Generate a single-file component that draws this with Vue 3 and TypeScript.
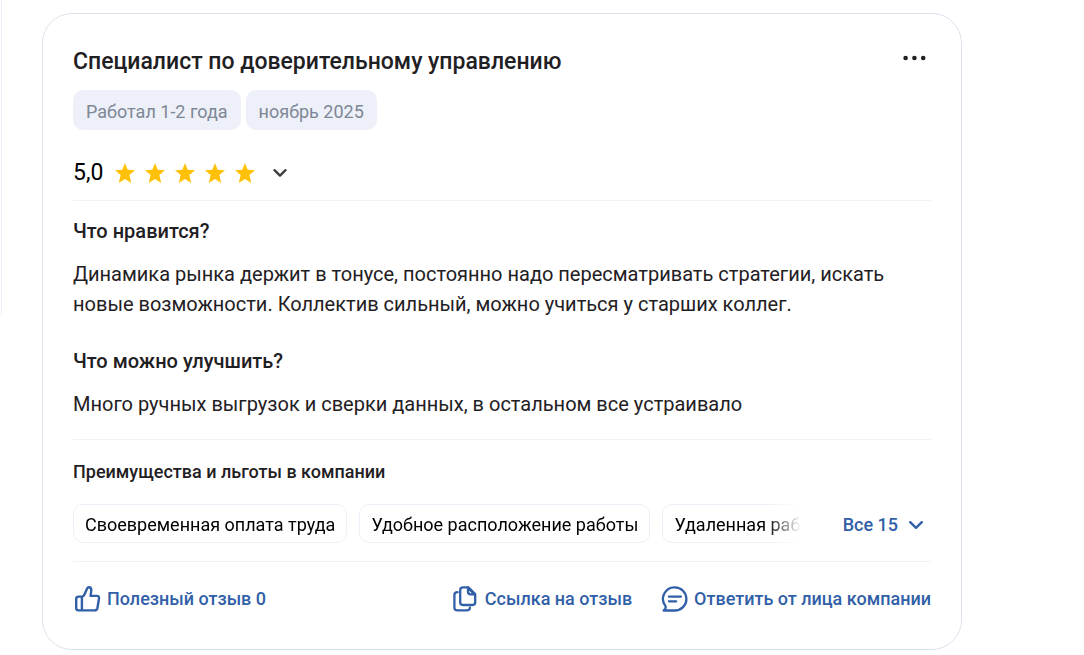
<script setup lang="ts">
const facts: string[] = ['Работал 1-2 года', 'ноябрь 2025']
const benefits: string[] = ['Своевременная оплата труда', 'Удобное расположение работы', 'Удаленная работа']
const stars = 5
</script>

<template>
  <main class="page">
    <div class="side"></div>
    <article class="card">
      <header class="head">
        <h2 class="title">Специалист по доверительному управлению</h2>
        <button class="more" type="button" aria-label="Ещё">
          <svg width="24" height="6" viewBox="0 0 24 6" fill="currentColor">
            <circle cx="2.6" cy="3" r="2.3" />
            <circle cx="11.4" cy="3" r="2.3" />
            <circle cx="20.2" cy="3" r="2.3" />
          </svg>
        </button>
      </header>

      <div class="facts">
        <span v-for="fact in facts" :key="fact" class="fact">{{ fact }}</span>
      </div>

      <button class="rating" type="button">
        <span class="score">5,0</span>
        <span class="stars">
          <svg v-for="n in stars" :key="n" width="20" height="20" viewBox="0 0 20 20" fill="#ffc107">
            <path d="M10 0 L12.7 6.7 L20 7.2 L14.4 12 L16.2 20 L10 15.9 L3.8 20 L5.6 12 L0 7.2 L7.3 6.7 Z" />
          </svg>
        </span>
        <svg class="chevron" width="16" height="10" viewBox="0 0 16 10" fill="none" stroke="currentColor" stroke-width="2.4" stroke-linecap="round" stroke-linejoin="round">
          <path d="M2.5 2.2 L8 7.6 L13.5 2.2" />
        </svg>
      </button>

      <section class="review">
        <h3 class="question">Что нравится?</h3>
        <p class="answer">Динамика рынка держит в тонусе, постоянно надо пересматривать стратегии, искать новые возможности. Коллектив сильный, можно учиться у старших коллег.</p>
        <h3 class="question">Что можно улучшить?</h3>
        <p class="answer">Много ручных выгрузок и сверки данных, в остальном все устраивало</p>
      </section>

      <section class="benefits">
        <h4 class="subtitle">Преимущества и льготы в компании</h4>
        <div class="benefit-row">
          <div class="benefit-list">
            <span v-for="benefit in benefits" :key="benefit" class="benefit">{{ benefit }}</span>
          </div>
          <button class="all" type="button">
            Все 15
            <svg width="16" height="10" viewBox="0 0 16 10" fill="none" stroke="currentColor" stroke-width="2.4" stroke-linecap="round" stroke-linejoin="round">
              <path d="M2.2 2.2 L8 7.8 L13.8 2.2" />
            </svg>
          </button>
        </div>
      </section>

      <footer class="actions">
        <button class="action useful" type="button">
          <svg width="28" height="28" viewBox="0 0 28 28" fill="none" stroke="currentColor" stroke-width="2.4" stroke-linecap="round" stroke-linejoin="round">
            <path d="M8.9 11.6 H5.6 Q3.2 11.6 3.2 14 V23 Q3.2 25.4 5.6 25.4 H21.8 Q24 25.4 24.4 23.3 L26 13.4 Q26.3 10.9 23.8 10.9 H17.6 L18.3 5.4 Q18.3 2.3 16 2.3 Q14.6 2.3 13.9 3.9 L11.6 9.2 Q10.7 11.3 8.9 11.6 V25.4" />
          </svg>
          Полезный отзыв 0
        </button>
        <button class="action" type="button">
          <svg width="28" height="28" viewBox="0 0 28 28" fill="none" stroke="currentColor" stroke-width="2.3" stroke-linecap="round" stroke-linejoin="round">
            <path d="M11.9 2.3 H17.4 L24.2 9.1 V17.3 Q24.2 20 21.5 20 H11.9 Q9.2 20 9.2 17.3 V5 Q9.2 2.3 11.9 2.3 Z" />
            <path d="M17 2.6 V6.8 Q17 9.4 19.6 9.4 H23.9 M17.2 3.2 L23.4 9.2" />
            <path d="M6.6 7.2 Q3.4 7.2 3.4 9.9 V22.6 Q3.4 25.3 6.1 25.3 H16.2 Q18.9 25.3 18.9 22.6" />
          </svg>
          Ссылка на отзыв
        </button>
        <button class="action" type="button">
          <svg width="28" height="28" viewBox="0 0 28 28" fill="none" stroke="currentColor" stroke-width="2.3" stroke-linecap="round" stroke-linejoin="round">
            <path d="M14.8 2.3 A11.6 11.6 0 0 1 14.8 25.5 H3.6 Q6.4 23.9 5.5 21.1 A11.6 11.6 0 0 1 14.8 2.3 Z" />
            <path d="M8.9 11.6 H21 M8.9 16.3 H16.2" />
          </svg>
          Ответить от лица компании
        </button>
      </footer>
    </article>
  </main>
</template>

<style>
html,
body {
  background: #fff;
}
</style>

<style scoped>
* {
  box-sizing: border-box;
}

.page {
  display: flex;
  align-items: flex-start;
  font-family: Roboto, "Liberation Sans", sans-serif;
  color: #1f2023;
}

.side {
  width: 2px;
  height: 316px;
  margin-right: 40px;
  border-right: 1px solid #eceff7;
  border-bottom-right-radius: 2px;
}

.card {
  flex: 1;
  min-width: 0;
  margin: 13px 122px 5px 0;
  padding: 30px 30px 34px;
  border: 1px solid #dce2ec;
  border-radius: 30px;
}

button {
  padding: 0;
  border: 0;
  background: none;
  font: inherit;
  color: inherit;
  cursor: pointer;
}

h2,
h3,
h4,
p {
  margin: 0;
}

svg {
  display: block;
  flex: none;
}

.head {
  display: flex;
  justify-content: space-between;
  align-items: flex-start;
}

.title {
  font-size: 23px;
  line-height: 36px;
  font-weight: 500;
}

.more {
  display: flex;
  align-items: center;
  height: 28px;
  margin-right: 4px;
}

.facts {
  display: flex;
  gap: 5px;
  margin-top: 10px;
}

.fact {
  height: 40px;
  padding: 2px 13px 0;
  border-radius: 10px;
  background: #edf0f8;
  color: #7d8796;
  font-size: 18px;
  line-height: 40px;
}

.facts,
.benefit-list {
  white-space: nowrap;
}

.rating {
  display: flex;
  align-items: center;
  height: 36px;
  margin-top: 25px;
}

.score {
  font-size: 23px;
  line-height: 36px;
  color: #000;
}

.stars {
  display: flex;
  gap: 10px;
  margin-left: 12px;
}

.chevron {
  margin-left: 17px;
  color: #3d3f43;
}

.review,
.benefits,
.actions {
  border-top: 1px solid #f1f3f9;
}

.review {
  margin-top: 9px;
  padding: 15px 0 20px;
}

.question {
  font-size: 20px;
  line-height: 30px;
  font-weight: 500;
}

.answer {
  margin-top: 13px;
  font-size: 20px;
  line-height: 30px;
}

.answer + .question {
  margin-top: 27px;
}

.benefits {
  padding: 20px 0 18px;
}

.subtitle {
  font-size: 18px;
  line-height: 24px;
  font-weight: 500;
}

.benefit-row {
  display: flex;
  align-items: center;
  margin-top: 20px;
}

.benefit-list {
  display: flex;
  flex: 1;
  gap: 12px;
  min-width: 0;
  overflow: hidden;
  mask-image: linear-gradient(to right, #000 calc(100% - 34px), transparent);
}

.benefit {
  flex: none;
  height: 39px;
  padding: 1px 11px 0;
  border: 1px solid #edf0f8;
  border-radius: 10px;
  color: #000;
  font-size: 18px;
  line-height: 37px;
}

.all {
  display: flex;
  align-items: center;
  gap: 10px;
  height: 39px;
  margin: 0 7px 0 42px;
  padding-top: 2px;
  color: #315fa8;
  font-size: 18px;
  font-weight: 500;
  white-space: nowrap;
}

.actions {
  display: flex;
  align-items: center;
  gap: 28px;
  padding-top: 20px;
}

.action {
  display: flex;
  align-items: center;
  gap: 6px;
  height: 33px;
  color: #315fa8;
  font-size: 18px;
  line-height: 22px;
  font-weight: 500;
  white-space: nowrap;
}

.useful {
  margin-right: auto;
}
</style>
